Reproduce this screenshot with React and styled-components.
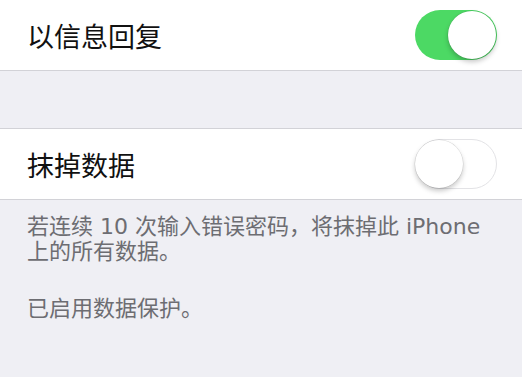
import React from 'react'
import styled, { createGlobalStyle } from 'styled-components'

const GlobalStyle = createGlobalStyle`
  html, body {
    margin: 0;
    padding: 0;
    background: #efeff4;
  }
  body {
    font-family: "DejaVu Sans", "Noto Sans CJK SC", sans-serif;
  }
`

const Page = styled.div`
  width: 522px;
  min-height: 377px;
  background: #efeff4;
  overflow: hidden;
`

const Group = styled.div`
  background: #fff;
  border-top: ${props => (props.$top ? '1px solid #d2d2d7' : 'none')};
  border-bottom: 1px solid #d2d2d7;
`

const Spacer = styled.div`
  height: 57px;
`

const Row = styled.div`
  height: 70px;
  display: flex;
  align-items: center;
  justify-content: space-between;
  padding: 0 25px 0 27px;
  box-sizing: border-box;
`

const Label = styled.span`
  font-family: "Noto Sans CJK SC", sans-serif;
  font-size: 27px;
  color: #111;
  line-height: 1;
`

const Track = styled.div`
  position: relative;
  width: 82px;
  height: 50px;
  border-radius: 25px;
  box-sizing: border-box;
  background: ${props => (props.$on ? '#4cd964' : '#fff')};
  border: ${props => (props.$on ? 'none' : '1.5px solid #e3e3e6')};
  flex-shrink: 0;
`

const Knob = styled.div`
  position: absolute;
  top: ${props => (props.$on ? '1px' : '0px')};
  left: ${props => (props.$on ? '33px' : '-1px')};
  width: 48px;
  height: 48px;
  border-radius: 50%;
  background: #fff;
  box-shadow: 0 0 0 0.5px rgba(0, 0, 0, 0.12), 0 3px 5px rgba(0, 0, 0, 0.22);
`

const Footer = styled.div`
  padding: 14px 27px 0 27px;
  color: #6d6d72;
  font-size: 22px;
  line-height: 25px;
`

const Note = styled.p`
  margin: 0 0 32px 0;
`

const Switch = ({ on }) => (
  <Track $on={on}>
    <Knob $on={on} />
  </Track>
)

export default function App() {
  return (
    <>
      <GlobalStyle />
      <Page>
        <Group>
          <Row>
            <Label>以信息回复</Label>
            <Switch on />
          </Row>
        </Group>
        <Spacer />
        <Group $top>
          <Row>
            <Label>抹掉数据</Label>
            <Switch on={false} />
          </Row>
        </Group>
        <Footer>
          <Note>若连续 10 次输入错误密码，将抹掉此 iPhone<br />上的所有数据。</Note>
          <Note>已启用数据保护。</Note>
        </Footer>
      </Page>
    </>
  )
}
